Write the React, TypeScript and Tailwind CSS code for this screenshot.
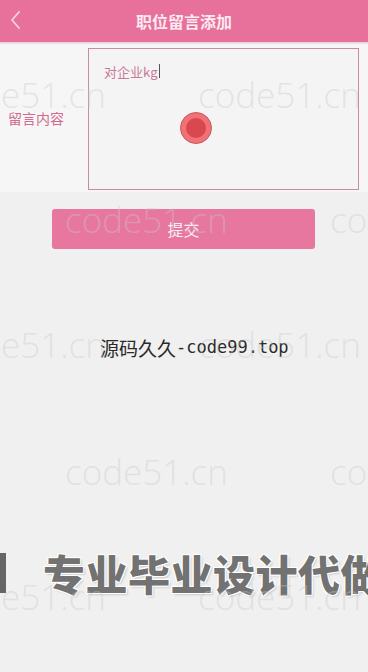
import React from "react";

const wmRows = [
  { top: 77, xs: [-57, 198] },
  { top: 202, xs: [65, 330] },
  { top: 327, xs: [-57, 198] },
  { top: 454, xs: [65, 330] },
  { top: 579, xs: [-57, 198] },
];

export default function App() {
  return (
    <div
      className="relative w-[368px] h-[672px] overflow-hidden bg-[#f0f0f0]"
      style={{ fontFamily: '"Noto Sans CJK SC", "Noto Sans", sans-serif' }}
    >
      {/* header */}
      <div className="relative h-[42px] bg-[#e7719a] flex items-center justify-center shadow-[0_1px_2px_rgba(230,113,154,0.35)]">
        <svg
          className="absolute left-[9px] top-[10px]"
          width="12"
          height="20"
          viewBox="0 0 12 20"
          fill="none"
        >
          <path d="M10 2 L3 10 L10 18" stroke="#f6d6e2" strokeWidth="1.8" strokeLinecap="round" strokeLinejoin="round" />
        </svg>
        <span className="text-[16px] font-bold text-[#fbeaf1] leading-none">职位留言添加</span>
      </div>

      {/* form */}
      <div className="mt-[2px] h-[148px] bg-[#f6f6f6] flex items-stretch">
        <div className="w-[88px] flex items-center pl-[8px]">
          <span className="text-[14px] text-[#d36a91] leading-none">留言内容</span>
        </div>
        <div className="relative mt-[4px] mb-[2px] w-[271px] border border-[#c98b9f] bg-[#f4f4f4] pl-[15px] pt-[15px]">
          <div className="flex items-center text-[13px] text-[#c8799a] leading-none">
            <span>对企业k</span>
            <span className="underline decoration-[#444]">g</span>
            <span className="ml-[1px] w-[1px] h-[14px] bg-[#555]" />
          </div>
          <div className="absolute left-[91px] top-[63px] w-[32px] h-[32px] rounded-full bg-[#f07274] border border-[#c75a60] flex items-center justify-center">
            <div className="w-[20px] h-[20px] rounded-full bg-[#d9474f]" />
          </div>
        </div>
      </div>

      {/* submit */}
      <div className="mt-[17px] pl-[52px]">
        <div className="w-[263px] h-[40px] rounded-[3px] bg-[#e8779f] flex items-center justify-center">
          <span className="text-[16px] text-[#fbeef3] leading-none">提交</span>
        </div>
      </div>

      {/* caption */}
      <div className="mt-[86px] pl-[100px] flex items-center h-[24px] text-[#2a2a2a]">
        <span className="text-[19px] leading-none">源码久久</span>
        <span
          className="text-[17px] leading-none"
          style={{ fontFamily: '"DejaVu Sans Mono", "Liberation Mono", monospace' }}
        >
          -code99.top
        </span>
      </div>

      {/* big banner text */}
      <div className="mt-[191px] h-[46px] flex items-center">
        <div className="shrink-0 w-[6px] h-[40px] bg-[#666]" />
        <span
          className="shrink-0 ml-[37px] whitespace-nowrap text-[42px] font-black leading-none text-[#727272] tracking-[0.5px]"
          style={{
            textShadow:
              "1px 1px 0 #fff, -1px -1px 0 #fff, 1px -1px 0 #fff, -1px 1px 0 #fff, 2px 2px 2px rgba(0,0,0,0.15)",
          }}
        >
          专业毕业设计代做
        </span>
      </div>

      {/* watermarks overlay */}
      <div className="pointer-events-none absolute inset-0">
        {wmRows.map((r, i) =>
          r.xs.map((x, j) => (
            <span
              key={`${i}-${j}`}
              className="absolute whitespace-nowrap text-[35px] font-light leading-none text-[#c8c8c8]/40"
              style={{ left: x, top: r.top, fontFamily: '"Open Sans", "Noto Sans", sans-serif' }}
            >
              code51.cn
            </span>
          ))
        )}
      </div>
    </div>
  );
}
